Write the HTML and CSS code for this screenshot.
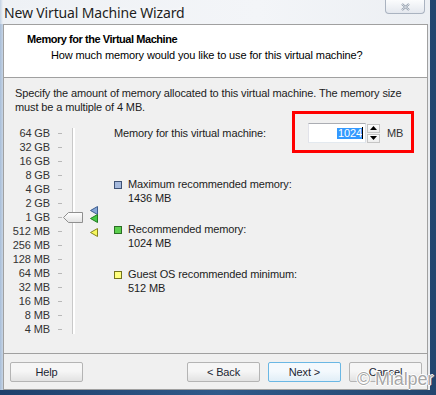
FILE: index.html
```html
<!DOCTYPE html>
<html lang="en">
<head>
    <meta charset="UTF-8">
    <title>New Virtual Machine Wizard</title>
    <link rel="stylesheet" href="styles.css">
</head>
<body>
    <div class="window">
        <div class="frame">
            <div class="titlebar">
                <span class="title">New Virtual Machine Wizard</span>
                <div class="close">
                    <svg width="9" height="8" viewBox="0 0 9 8">
                        <path d="M1 1 L8 7 M8 1 L1 7" stroke="#8a96a6" stroke-width="2.2" fill="none"/>
                        <path d="M1 1 L8 7 M8 1 L1 7" stroke="#f4f6f9" stroke-width="0.8" fill="none"/>
                    </svg>
                </div>
            </div>

            <div class="client">
                <div class="header">
                    <h1>Memory for the Virtual Machine</h1>
                    <p>How much memory would you like to use for this virtual machine?</p>
                </div>

                <div class="content">
                    <p class="intro">Specify the amount of memory allocated to this virtual machine. The memory size<br>must be a multiple of 4 MB.</p>

                    <div class="memory">
                        <div class="slider">
                            <ul class="scale">
                                <li>64 GB</li>
                                <li>32 GB</li>
                                <li>16 GB</li>
                                <li>8 GB</li>
                                <li>4 GB</li>
                                <li>2 GB</li>
                                <li>1 GB</li>
                                <li>512 MB</li>
                                <li>256 MB</li>
                                <li>128 MB</li>
                                <li>64 MB</li>
                                <li>32 MB</li>
                                <li>16 MB</li>
                                <li>8 MB</li>
                                <li>4 MB</li>
                            </ul>
                            <div class="track"></div>
                            <!-- ползунок и маркеры рекомендаций -->
                            <svg class="thumb" width="20" height="11" viewBox="0 0 20 11">
                                <defs>
                                    <linearGradient id="thumbFill" x1="0" y1="0" x2="0" y2="1">
                                        <stop offset="0" stop-color="#ffffff"/>
                                        <stop offset="1" stop-color="#e2e2e2"/>
                                    </linearGradient>
                                </defs>
                                <path d="M0.5 5.5 L5.5 0.5 H19.5 V10.5 H5.5 Z" fill="url(#thumbFill)" stroke="#8f8f8f"/>
                            </svg>
                            <svg class="marker marker-max" width="8" height="9" viewBox="0 0 8 9">
                                <path d="M0.5 4.5 L7.5 0.5 V8.5 Z" fill="#86a6d6" stroke="#3d5d8f"/>
                            </svg>
                            <svg class="marker marker-rec" width="8" height="9" viewBox="0 0 8 9">
                                <path d="M0.5 4.5 L7.5 0.5 V8.5 Z" fill="#45c945" stroke="#217a21"/>
                            </svg>
                            <svg class="marker marker-min" width="8" height="9" viewBox="0 0 8 9">
                                <path d="M0.5 4.5 L7.5 0.5 V8.5 Z" fill="#f7f75c" stroke="#85851e"/>
                            </svg>
                        </div>

                        <div class="settings">
                            <div class="field-row">
                                <label>Memory for this virtual machine:</label>
                                <div class="field">
                                    <div class="textbox"><span class="sel">1024</span><span class="caret"></span></div>
                                    <div class="spin">
                                        <div class="spin-btn">
                                            <svg width="7" height="4" viewBox="0 0 7 4"><path d="M3.5 0 L7 4 H0 Z" fill="#000"/></svg>
                                        </div>
                                        <div class="spin-btn">
                                            <svg width="7" height="4" viewBox="0 0 7 4"><path d="M0 0 H7 L3.5 4 Z" fill="#000"/></svg>
                                        </div>
                                    </div>
                                    <span class="unit">MB</span>
                                    <div class="highlight"></div>
                                </div>
                            </div>

                            <div class="legend">
                                <div class="legend-item">
                                    <span class="swatch swatch-max"></span>
                                    <div>Maximum recommended memory:<br>1436 MB</div>
                                </div>
                                <div class="legend-item">
                                    <span class="swatch swatch-rec"></span>
                                    <div>Recommended memory:<br>1024 MB</div>
                                </div>
                                <div class="legend-item">
                                    <span class="swatch swatch-min"></span>
                                    <div>Guest OS recommended minimum:<br>512 MB</div>
                                </div>
                            </div>
                        </div>
                    </div>
                </div>

                <div class="footer">
                    <button class="btn">Help</button>
                    <button class="btn btn-back">&lt; Back</button>
                    <button class="btn btn-default">Next &gt;</button>
                    <button class="btn">Cancel</button>
                </div>
            </div>
        </div>
        <div class="watermark">© Mialper</div>
    </div>
</body>
</html>
```

FILE: styles.css
```css
body {
    margin: 0;
    background-color: #2b4e78;
    font-family: "Liberation Sans", Arial, sans-serif;
    font-size: 11px;
    letter-spacing: -0.12px;
    color: #1c1c1c;
}
.window {
    position: relative;
    width: 436px;
    height: 395px;
    overflow: hidden;
    background: linear-gradient(to right, #1d3f6b, #2f5a8a 50%, #23466f);
}
.frame {
    width: 430px;
    height: 390px;
    background: linear-gradient(to right, #a9bed8 0, #c6d4e5 3px, #e9ecf0 3px);
}
.titlebar {
    height: 24px;
    display: flex;
    justify-content: space-between;
    align-items: flex-start;
    padding: 0 5px 0 4px;
    background: linear-gradient(to right, #c3d2e4 0, #eef1f5 3px, #f3f5f8 60%, #eceff3);
}
.title {
    font-family: "Noto Sans", sans-serif;
    font-size: 14px;
    letter-spacing: -0.15px;
    line-height: 25px;
    color: #1e1e1e;
    text-shadow: 0 0 5px #ffffff;
}
.close {
    width: 40px;
    height: 14px;
    box-sizing: border-box;
    border: 1px solid #aab3c0;
    border-top: none;
    border-radius: 0 0 4px 4px;
    background: linear-gradient(#fbfcfd, #e4e8ee);
    display: flex;
    align-items: center;
    justify-content: center;
}
.client {
    margin-left: 3px;
    width: 425px;
    height: 366px;
    box-sizing: border-box;
    border: 1px solid #a0a0a0;
    background-color: #f0f0f0;
    display: flex;
    flex-direction: column;
}
.header {
    height: 52px;
    background-color: #fff;
    border-bottom: 1px solid #a0a0a0;
}
.header h1 {
    margin: 0;
    padding: 7px 0 0 23px;
    font-size: 11px;
    letter-spacing: -0.45px;
    line-height: 14px;
    color: #000;
}
.header p {
    margin: 2px 0 0 47px;
    line-height: 14px;
    color: #000;
}
.content {
    height: 275px;
    padding: 8px 0 0 11px;
    box-sizing: border-box;
}
.intro {
    margin: 0;
    line-height: 14px;
    white-space: nowrap;
}
.memory {
    display: flex;
    margin-top: 9px;
}
.slider {
    position: relative;
    flex: none;
    width: 99px;
    margin-top: 3px;
}
.scale {
    list-style: none;
    margin: 0;
    padding: 0;
    width: 47px;
    color: #333;
}
.scale li {
    display: flex;
    justify-content: flex-end;
    align-items: center;
    height: 14px;
    white-space: nowrap;
}
.scale li::after {
    content: "";
    flex: none;
    width: 4px;
    height: 1px;
    margin-left: 8px;
    background-color: #b8b8b8;
}
.track {
    position: absolute;
    left: 57px;
    top: 2px;
    bottom: 2px;
    width: 2px;
    border-left: 1px solid #c9c9c9;
    background-color: #fff;
}
.thumb {
    position: absolute;
    left: 48px;
    top: 86px;
}
.marker {
    position: absolute;
    left: 75px;
}
.marker-max { top: 80px; }
.marker-rec { top: 88px; }
.marker-min { top: 102px; }
.settings {
    flex: 1;
}
.field-row {
    display: flex;
    align-items: center;
    height: 20px;
}
.field-row label {
    width: 194px;
    white-space: nowrap;
}
.field {
    position: relative;
    display: flex;
    align-items: center;
}
.textbox {
    width: 58px;
    height: 20px;
    box-sizing: border-box;
    border: 1px solid #abadb3;
    border-color: #abadb3 #dbdfe6 #e3e9ef #e2e3ea;
    background-color: #fff;
    display: flex;
    align-items: center;
    justify-content: flex-end;
    padding-right: 2px;
}
.sel {
    background-color: #3399ff;
    color: #fff;
    line-height: 11px;
    padding: 0 0 0 1px;
}
.caret {
    width: 1px;
    height: 12px;
    background-color: #000;
}
.spin {
    display: flex;
    flex-direction: column;
    gap: 1px;
    margin-left: 1px;
    height: 19px;
}
.spin-btn {
    width: 13px;
    height: 9px;
    box-sizing: border-box;
    border: 1px solid #c5c5c5;
    background: linear-gradient(#fdfdfd, #eeeeee);
    display: flex;
    align-items: center;
    justify-content: center;
}
.unit {
    margin-left: 7px;
    color: #333;
}
.highlight {
    position: absolute;
    left: -16px;
    top: -12px;
    width: 122px;
    height: 42px;
    box-sizing: border-box;
    border: 3px solid #ff0000;
}
.legend {
    margin-top: 34px;
    display: flex;
    flex-direction: column;
    gap: 17px;
}
.legend-item {
    display: flex;
    align-items: flex-start;
    line-height: 14px;
}
.swatch {
    flex: none;
    width: 8px;
    height: 8px;
    box-sizing: border-box;
    margin: 4px 6px 0 0;
    border: 1px solid #444;
}
.swatch-max {
    background-color: #a5b9dc;
    border-color: #3f5275;
}
.swatch-rec {
    background-color: #5ccf4e;
    border-color: #2b6e25;
}
.swatch-min {
    background-color: #ffff7e;
    border-color: #73731f;
}
.footer {
    height: 35px;
    box-sizing: border-box;
    border-top: 1px solid #a0a0a0;
    display: flex;
    align-items: flex-start;
    gap: 8px;
    padding: 8px 5px 0 6px;
}
.btn {
    width: 73px;
    height: 20px;
    box-sizing: border-box;
    border: 1px solid #b4b4b4;
    border-radius: 2px;
    background: linear-gradient(#f6f6f6 45%, #e2e2e2);
    font-family: "Liberation Sans", Arial, sans-serif;
    font-size: 11px;
    letter-spacing: -0.12px;
    color: #1c2633;
    padding: 0;
}
.btn-back {
    margin-left: auto;
}
.btn-default {
    border-color: #6ab7e4;
    background: linear-gradient(#f4f9fd 45%, #e1eef7);
}
.watermark {
    position: absolute;
    left: 357px;
    top: 369px;
    font-family: "Liberation Sans", Arial, sans-serif;
    font-size: 18px;
    color: rgba(150, 150, 150, 0.85);
    text-shadow: 1px 0 0 #fff, -1px 0 0 #fff, 0 1px 0 #fff, 0 -1px 0 #fff;
    white-space: nowrap;
}
```
